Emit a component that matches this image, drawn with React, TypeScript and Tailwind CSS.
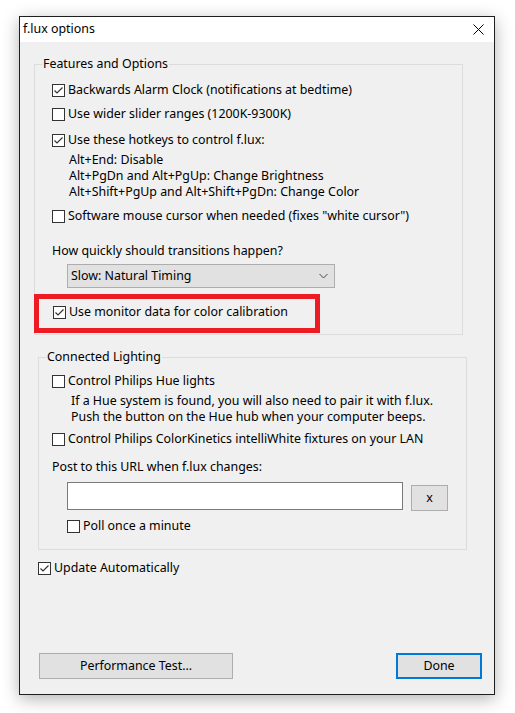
import type { ReactNode } from "react";

function Box({ checked = false }: { checked?: boolean }) {
  return (
    <span className="w-[13px] h-[13px] shrink-0 border border-[#333333] bg-white flex items-center justify-center">
      {checked && (
        <svg width="11" height="11" viewBox="0 0 11 11">
          <path d="M1.5 5.5 L4 8 L9.5 2.5" fill="none" stroke="#333333" strokeWidth="1.2" />
        </svg>
      )}
    </span>
  );
}

function CheckRow({ checked, children, className = "" }: { checked?: boolean; children: ReactNode; className?: string }) {
  return (
    <div className={`flex items-center h-[24px] gap-[3px] ${className}`}>
      <Box checked={checked} />
      <span className="whitespace-nowrap">{children}</span>
    </div>
  );
}

function Button({ children, className = "" }: { children: ReactNode; className?: string }) {
  return (
    <button className={`h-[26px] bg-[#e1e1e1] flex items-center justify-center ${className}`}>
      {children}
    </button>
  );
}

export default function App() {
  return (
    <div className="min-h-[713px] bg-white pt-[16px] pl-[19px] text-[12.4px] text-black font-['Noto_Sans',sans-serif]">
      <div className="w-[476px] h-[679px] border border-[#1f1f1f] flex flex-col shadow-[0_4px_16px_rgba(0,0,0,0.3)]">
        <div className="h-[25px] bg-white flex items-center justify-between pl-[3px] pr-[10px] shrink-0">
          <span>f.lux options</span>
          <svg width="11" height="11" viewBox="0 0 11 11">
            <path d="M0.5 0.5 L10.5 10.5 M10.5 0.5 L0.5 10.5" stroke="#000" strokeWidth="1" />
          </svg>
        </div>

        <div className="relative flex-1 bg-[#f0f0f0] flex flex-col pb-[15px]">
          <fieldset className="ml-[14px] mt-[14px] w-[429px] border border-[#dcdcdc]">
            <legend className="ml-[7px] px-[1px] leading-[16px]">Features and Options</legend>
            <div className="pl-[17px] pt-[6px] pb-[10px]">
              <CheckRow checked>Backwards Alarm Clock (notifications at bedtime)</CheckRow>
              <CheckRow>Use wider slider ranges (1200K-9300K)</CheckRow>
              <CheckRow checked className="mt-[2px]">Use these hotkeys to control f.lux:</CheckRow>
              <div className="pl-[17px] leading-[16px]">
                <div>Alt+End: Disable</div>
                <div>Alt+PgDn and Alt+PgUp: Change Brightness</div>
                <div>Alt+Shift+PgUp and Alt+Shift+PgDn: Change Color</div>
              </div>
              <CheckRow className="mt-[4px]">Software mouse cursor when needed (fixes "white cursor")</CheckRow>
              <div className="mt-[15px] leading-[16px]">How quickly should transitions happen?</div>
              <div className="mt-[5px] ml-[15px] w-[268px] h-[24px] bg-[#e1e1e1] border border-[#adadad] flex items-center justify-between pl-[3px] pr-[6px]">
                <span>Slow: Natural Timing</span>
                <svg width="9" height="6" viewBox="0 0 9 6">
                  <path d="M0.5 1 L4.5 5 L8.5 1" fill="none" stroke="#444" strokeWidth="1" />
                </svg>
              </div>
              <CheckRow checked className="mt-[12px] ml-[1px]">Use monitor data for color calibration</CheckRow>
            </div>
          </fieldset>

          <fieldset className="ml-[18px] mt-[14px] w-[429px] border border-[#dcdcdc]">
            <legend className="ml-[7px] px-[1px] leading-[16px]">Connected Lighting</legend>
            <div className="pl-[13px] pt-[4px] pb-[11px]">
              <CheckRow>Control Philips Hue lights</CheckRow>
              <div className="pl-[19px] leading-[16px]">
                <div>If a Hue system is found, you will also need to pair it with f.lux.</div>
                <div>Push the button on the Hue hub when your computer beeps.</div>
              </div>
              <CheckRow className="mt-[2px]">Control Philips ColorKinetics intelliWhite fixtures on your LAN</CheckRow>
              <div className="mt-[8px] leading-[16px]">Post to this URL when f.lux changes:</div>
              <div className="mt-[7px] ml-[15px] flex items-start gap-[8px]">
                <div className="w-[336px] h-[28px] bg-white border border-[#7a7a7a]" />
                <Button className="mt-[3px] w-[37px] border border-[#adadad]">x</Button>
              </div>
              <CheckRow className="mt-[3px] ml-[15px]">Poll once a minute</CheckRow>
            </div>
          </fieldset>

          <CheckRow checked className="mt-[6px] ml-[18px]">Update Automatically</CheckRow>

          <div className="mt-auto flex justify-between pl-[19px] pr-[12px]">
            <Button className="w-[194px] border border-[#adadad]">Performance Test...</Button>
            <Button className="w-[86px] border-2 border-[#0078d7]">Done</Button>
          </div>

          <div className="absolute left-[14px] top-[252px] w-[286px] h-[39px] border-[5px] border-[#ed1c24]" />
        </div>
      </div>
    </div>
  );
}
